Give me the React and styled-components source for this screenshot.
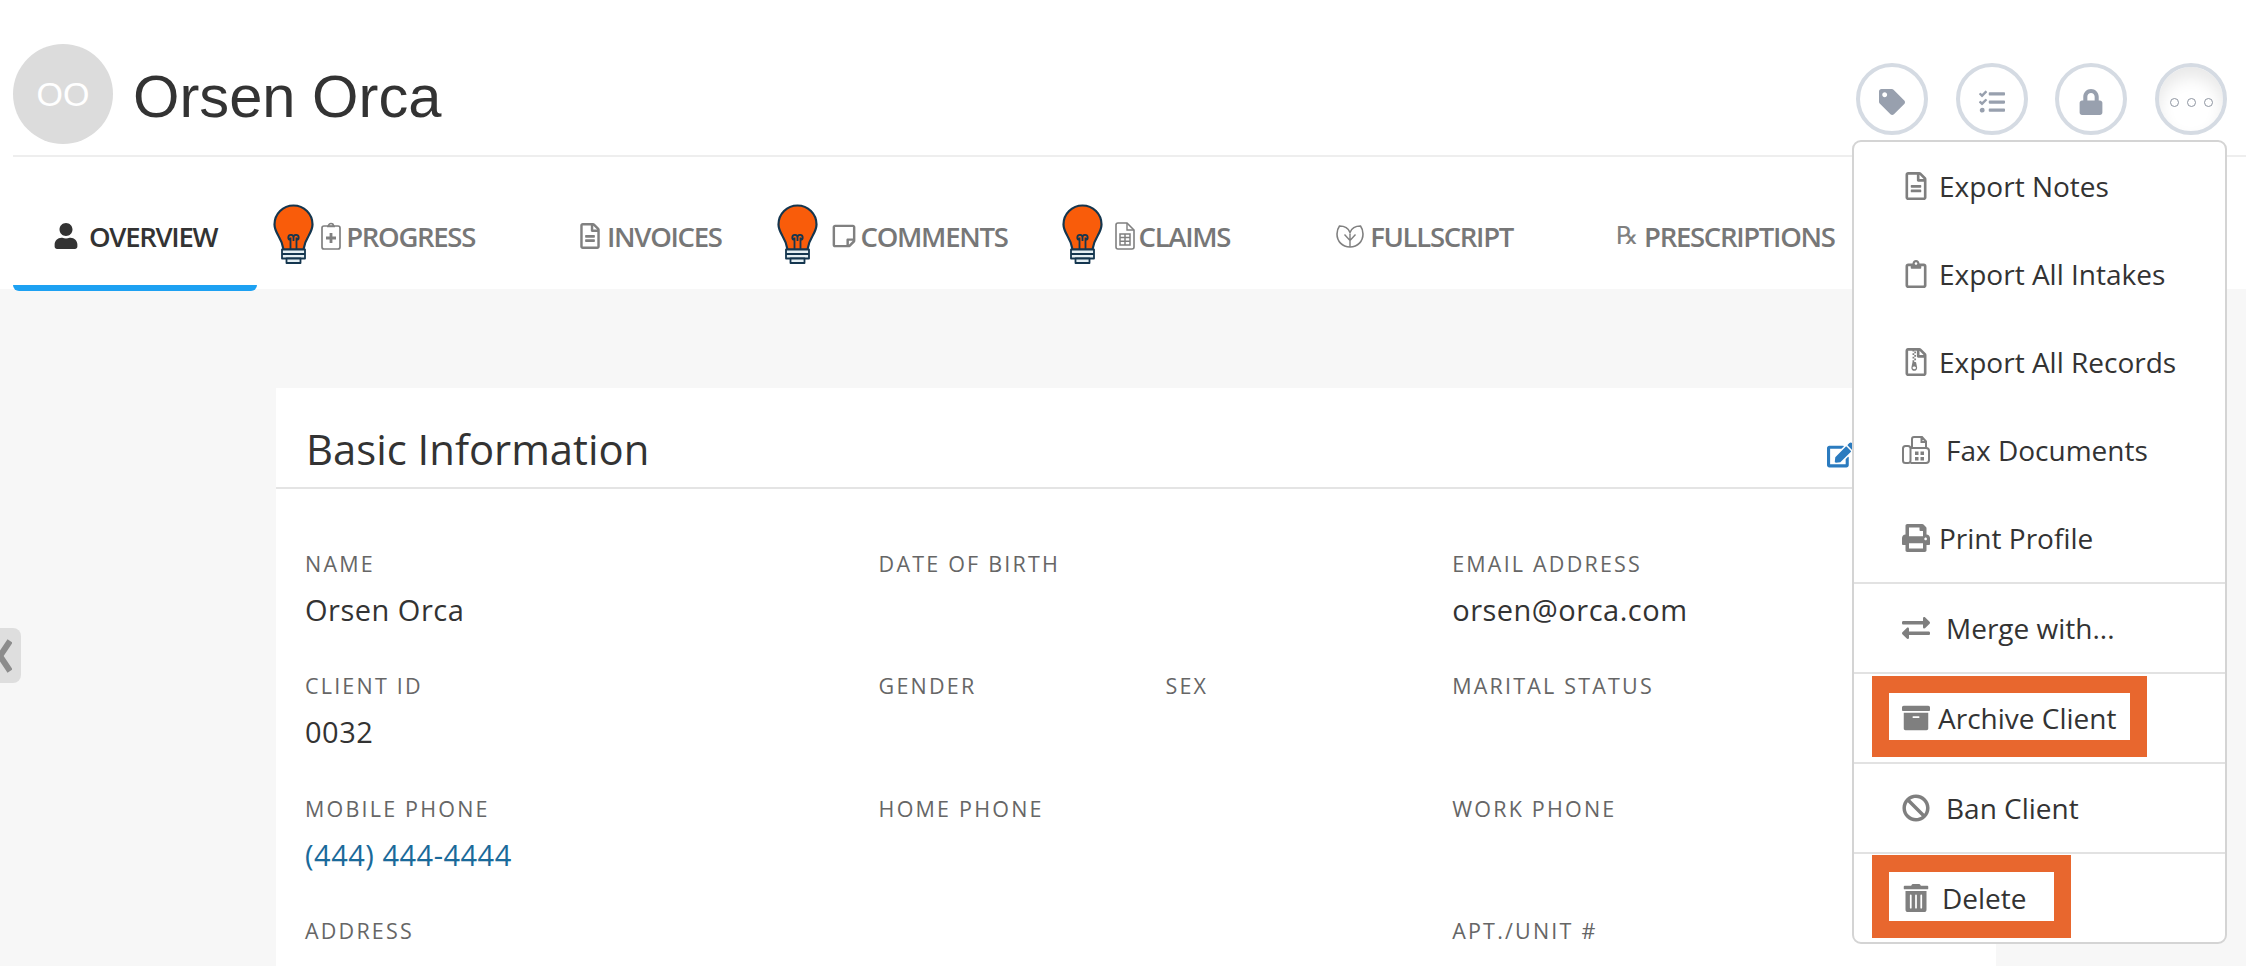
import styled, { createGlobalStyle } from "styled-components";
import {
  FaArchive,
  FaBan,
  FaEdit,
  FaExchangeAlt,
  FaLock,
  FaPrint,
  FaRegClipboard,
  FaRegFileAlt,
  FaRegFileArchive,
  FaRegStickyNote,
  FaTag,
  FaTasks,
  FaTrashAlt,
  FaUser,
} from "react-icons/fa";

const GlobalStyle = createGlobalStyle`
  html, body {
    margin: 0;
    padding: 0;
    background: #fff;
    font-family: "Open Sans", sans-serif;
  }
`;

const Page = styled.div`
  position: relative;
  width: 2246px;
  height: 966px;
  overflow: hidden;
  background: #fff;
`;

const Header = styled.header`
  position: relative;
  display: flex;
  align-items: flex-start;
  justify-content: space-between;
  height: 111px;
  margin-left: 13px;
  padding-top: 44px;
  border-bottom: 2px solid #eeeeee;
`;

const Identity = styled.div`
  display: flex;
  align-items: flex-start;
  gap: 20px;
`;

const Avatar = styled.div`
  display: flex;
  align-items: center;
  justify-content: center;
  width: 100px;
  height: 100px;
  border-radius: 50%;
  background: #dcdcdc;
  color: #fff;
  font-family: "Liberation Sans", sans-serif;
  font-size: 34px;
`;

const ClientName = styled.h1`
  margin: 3px 0 0;
  font-family: "Liberation Sans", sans-serif;
  font-size: 59.7px;
  font-weight: 400;
  line-height: 100px;
  color: #333;
`;

const Actions = styled.div`
  display: flex;
  gap: 27.6px;
  margin-top: 19px;
  margin-right: 19px;
`;

const RoundButton = styled.button`
  display: flex;
  align-items: center;
  justify-content: center;
  gap: 8px;
  width: 72px;
  height: 72px;
  padding: 6px 0 0;
  box-sizing: border-box;
  border: 4px solid #d5dbe3;
  border-radius: 50%;
  background: #fff;
  color: #98a0ae;
  font-size: 26px;
  box-shadow: ${(p) => (p.$open ? "inset 0 10px 16px rgba(0, 0, 0, 0.09)" : "none")};
`;

const Dot = styled.span`
  width: 9px;
  height: 9px;
  box-sizing: border-box;
  border: 1px solid #8e95a1;
  border-radius: 50%;
`;

const Menu = styled.div`
  position: absolute;
  z-index: 5;
  top: 140px;
  left: 1852px;
  width: 375px;
  box-sizing: border-box;
  border: 2px solid #d4d4d4;
  border-radius: 9px;
  background: #fff;
`;

const MenuSection = styled.div`
  border-top: ${(p) => (p.$first ? "none" : "2px solid #e2e2e2")};
`;

const MenuItem = styled.div`
  display: flex;
  align-items: ${(p) => (p.$marked ? "flex-start" : "center")};
  height: 88px;
  padding-left: ${(p) => (p.$marked ? 18 : 48)}px;
  color: #333;
  font-size: 28px;
  white-space: nowrap;
`;

const Marked = styled.div`
  display: flex;
  align-items: center;
  width: ${(p) => p.$width}px;
  height: ${(p) => p.$height}px;
  margin-top: ${(p) => p.$top}px;
  padding-top: ${(p) => p.$nudge || 0}px;
  padding-left: 13px;
  border: 17px solid #e8672e;
`;

const MenuIcon = styled.span`
  flex: none;
  display: flex;
  align-items: center;
  width: ${(p) => p.$slot}px;
  color: #7f7f7f;
  font-size: 28px;

  svg {
    display: block;
  }
`;

const TabBar = styled.nav`
  display: flex;
  height: 132px;
  margin-left: 13px;
`;

const Tab = styled.div`
  position: relative;
  z-index: 1;
  display: flex;
  align-items: center;
  gap: ${(p) => p.$gap ?? 7}px;
  height: ${(p) => (p.$active ? 134 : 132)}px;
  margin-right: ${(p) => p.$after ?? 24}px;
  padding: ${(p) => (p.$active ? 30 : 26)}px 40px 0;
  box-sizing: border-box;
  border-bottom: ${(p) => (p.$active ? "6px solid #1da1f2" : "none")};
  border-radius: 0 0 6px 6px;
  color: ${(p) => (p.$active ? "#333" : "#777")};
  font-size: 27.5px;
  font-weight: 550;
  letter-spacing: -1.3px;
  white-space: nowrap;
`;

const TabIcon = styled.span`
  flex: none;
  display: flex;
  align-items: center;
  color: ${(p) => (p.$active ? "#333" : "#808080")};
  font-size: 26px;

  svg {
    display: block;
  }
`;

const RxMark = styled.span`
  display: block;
  width: 24px;
  color: #808080;
  font-family: "DejaVu Sans", sans-serif;
  font-size: 25px;
  font-weight: 400;
  line-height: 28px;
  letter-spacing: 0;
`;

const BulbSpot = styled.span`
  position: absolute;
  top: 47px;
  left: ${(p) => p.$left}px;
`;

const Main = styled.main`
  height: 677px;
  padding: 99px 0 0 276px;
  box-sizing: border-box;
  background: #f7f7f7;
`;

const Card = styled.section`
  width: 1720px;
  height: 700px;
  background: #fff;
`;

const CardHeader = styled.div`
  display: flex;
  align-items: center;
  justify-content: space-between;
  height: 101px;
  padding: 22px 0 0 30px;
  box-sizing: border-box;
  border-bottom: 2px solid #e4e4e4;
`;

const CardTitle = styled.h2`
  margin: 0;
  color: #333;
  font-size: 41.8px;
  font-weight: 400;
`;

const EditLink = styled.span`
  display: flex;
  margin: 13px 141px 0 0;
  color: #2b7bbf;
  font-size: 28px;
`;

const FieldGrid = styled.div`
  display: grid;
  grid-template-columns: repeat(6, 286.8px);
  grid-auto-rows: 122.3px;
  padding: 59px 0 0 29px;
`;

const Field = styled.div`
  grid-column: span ${(p) => p.$span || 2};
`;

const Label = styled.div`
  color: #666;
  font-size: 21.5px;
  line-height: 32px;
  letter-spacing: 2.2px;
`;

const Value = styled.div`
  margin-top: 10px;
  color: ${(p) => (p.$link ? "#1a6a9a" : "#333")};
  font-size: 29px;
  line-height: 40px;
  letter-spacing: 0.5px;
`;

const SideHandle = styled.div`
  position: absolute;
  top: 628px;
  left: 0;
  display: flex;
  align-items: center;
  width: 21px;
  height: 55px;
  overflow: hidden;
  border-radius: 0 8px 8px 0;
  background: #dedede;
  color: #8c8c8c;
`;

function ClippedChevron() {
  return (
    <svg width="12" height="36" viewBox="0 0 12 36" fill="none" stroke="currentColor" strokeWidth="6">
      <path d="M10 3L0 18l10 15" />
    </svg>
  );
}

function Bulb() {
  return (
    <svg width="41" height="60" viewBox="0 0 41 60">
      <path
        d="M20.500 1.500C10 1.500 1.500 10 1.500 20.500 1.500 25 3.500 28.500 5.500 32 8 36 9.500 40 10.500 45.500h20C31.500 40 33 36 35.500 32 37.500 28.500 39.500 25 39.500 20.500 39.500 10 31 1.500 20.500 1.500Z"
        fill="#f95c0a"
        stroke="#14364f"
        strokeWidth="2.2"
      />
      <path
        d="M17.500 45.500V33.500M23.500 45.500V33.500M17.500 36a2.600 2.600 0 1 1 3-2.500V37M23.500 36a2.600 2.600 0 1 0-3-2.500"
        fill="none"
        stroke="#14364f"
        strokeWidth="1.8"
      />
      <path d="M9 45.500h23v4.500H9zM9 50h23v4.500H9z" fill="#e6f0f4" stroke="#14364f" strokeWidth="1.800" strokeLinejoin="round" />
      <path d="M13.500 54.500h14V59h-14z" fill="#e6f0f4" stroke="#14364f" strokeWidth="1.800" strokeLinejoin="round" />
    </svg>
  );
}

function ClipboardPlus() {
  return (
    <svg width="20" height="28" viewBox="0 0 20 28" fill="none" stroke="currentColor">
      <rect x="1" y="4" width="18" height="23" rx="2" strokeWidth="1.7" />
      <path d="M6 4.500h8M7.500 4a2.500 2.500 0 0 1 5 0" strokeWidth="1.700" />
      <path d="M10 11v10M5 16h10" strokeWidth="2.800" />
    </svg>
  );
}

function ClaimsFile() {
  return (
    <svg width="20" height="28" viewBox="0 0 20 28" fill="none" stroke="currentColor">
      <path d="M3 1h9l7 7v17a2 2 0 0 1-2 2H3a2 2 0 0 1-2-2V3a2 2 0 0 1 2-2Z" strokeWidth="1.600" />
      <path d="M12 1v7h7" strokeWidth="1.400" />
      <path d="M5 12h10v11H5zM5 15.500h10M5 19.200h10M10 12v11" strokeWidth="1.500" />
    </svg>
  );
}

function LeafMark() {
  return (
    <svg width="28" height="23" viewBox="0 0 28 23" fill="none" stroke="currentColor" strokeWidth="1.600">
      <path d="M14 22C6 22 1 16 1 9 1 5.500 2 3 3.500 1 9 1 12.500 3.500 14 7.500 15.500 3.500 19 1 24.500 1 26 3 27 5.500 27 9 27 16 22 22 14 22Z" />
      <path d="M14 22V9M14 15.500L8.500 9.500M14 15.500L19.500 9.500" strokeWidth="1.400" />
    </svg>
  );
}

function FaxMark() {
  return (
    <svg width="28" height="28" viewBox="0 0 28 28" fill="none" stroke="currentColor" strokeWidth="2">
      <rect x="1" y="10" width="7.500" height="17" rx="2.500" />
      <path d="M8.500 12H24a3 3 0 0 1 3 3v9a3 3 0 0 1-3 3H8.500" />
      <path d="M10 12V3a2 2 0 0 1 2-2h8l4 4.500V12M19.500 1v5H24" />
      <path d="M13 15.500h3.500V19H13zM18.500 15.500H22V19h-3.500zM13 21h3.500v3.500H13zM18.500 21H22v3.500h-3.500z" fill="currentColor" stroke="none" />
    </svg>
  );
}

const Tabs = [
  { label: "OVERVIEW", active: true, icon: <FaUser />, gap: 10 },
  { label: "PROGRESS", icon: <ClipboardPlus />, gap: 5, bulb: -8, after: 22 },
  { label: "INVOICES", icon: <FaRegFileAlt />, gap: 4, after: 29 },
  { label: "COMMENTS", icon: <FaRegStickyNote />, gap: 4, bulb: -14, after: 27 },
  { label: "CLAIMS", icon: <ClaimsFile />, gap: 4, bulb: -13, after: 26 },
  { label: "FULLSCRIPT", icon: <LeafMark />, gap: 6, after: 23 },
  { label: "PRESCRIPTIONS", icon: <RxMark>℞</RxMark>, gap: 4, after: 0 },
];

const Fields = [
  { label: "NAME", value: "Orsen Orca" },
  { label: "DATE OF BIRTH" },
  { label: "EMAIL ADDRESS", value: "orsen@orca.com" },
  { label: "CLIENT ID", value: "0032" },
  { label: "GENDER", span: 1 },
  { label: "SEX", span: 1 },
  { label: "MARITAL STATUS" },
  { label: "MOBILE PHONE", value: "(444) 444-4444", link: true },
  { label: "HOME PHONE" },
  { label: "WORK PHONE" },
  { label: "ADDRESS", span: 4 },
  { label: "APT./UNIT #" },
];

export default function App() {
  return (
    <Page>
      <GlobalStyle />
      <Header>
        <Identity>
          <Avatar>OO</Avatar>
          <ClientName>Orsen Orca</ClientName>
        </Identity>
        <Actions>
          <RoundButton><FaTag /></RoundButton>
          <RoundButton><FaTasks /></RoundButton>
          <RoundButton><FaLock /></RoundButton>
          <RoundButton $open>
            <Dot />
            <Dot />
            <Dot />
          </RoundButton>
        </Actions>
      </Header>

      <Menu>
        <MenuSection $first>
          <MenuItem><MenuIcon $slot={37}><FaRegFileAlt /></MenuIcon>Export Notes</MenuItem>
          <MenuItem><MenuIcon $slot={37}><FaRegClipboard /></MenuIcon>Export All Intakes</MenuItem>
          <MenuItem><MenuIcon $slot={37}><FaRegFileArchive /></MenuIcon>Export All Records</MenuItem>
          <MenuItem><MenuIcon $slot={44}><FaxMark /></MenuIcon>Fax Documents</MenuItem>
          <MenuItem><MenuIcon $slot={37}><FaPrint /></MenuIcon>Print Profile</MenuItem>
        </MenuSection>
        <MenuSection>
          <MenuItem><MenuIcon $slot={44}><FaExchangeAlt /></MenuIcon>Merge with...</MenuItem>
        </MenuSection>
        <MenuSection>
          <MenuItem $marked>
            <Marked $width={228} $height={45} $top={2} $nudge={2}>
              <MenuIcon $slot={36}><FaArchive /></MenuIcon>Archive Client
            </Marked>
          </MenuItem>
        </MenuSection>
        <MenuSection>
          <MenuItem><MenuIcon $slot={44}><FaBan /></MenuIcon>Ban Client</MenuItem>
        </MenuSection>
        <MenuSection>
          <MenuItem $marked>
            <Marked $width={152} $height={46} $top={1} $nudge={3}>
              <MenuIcon $slot={40}><FaTrashAlt /></MenuIcon>Delete
            </Marked>
          </MenuItem>
        </MenuSection>
      </Menu>

      <TabBar>
        {Tabs.map((tab) => (
          <Tab key={tab.label} $active={tab.active} $gap={tab.gap} $after={tab.after}>
            {tab.bulb !== undefined && (
              <BulbSpot $left={tab.bulb}>
                <Bulb />
              </BulbSpot>
            )}
            <TabIcon $active={tab.active}>{tab.icon}</TabIcon>
            {tab.label}
          </Tab>
        ))}
      </TabBar>

      <Main>
        <Card>
          <CardHeader>
            <CardTitle>Basic Information</CardTitle>
            <EditLink><FaEdit /></EditLink>
          </CardHeader>
          <FieldGrid>
            {Fields.map((field) => (
              <Field key={field.label} $span={field.span}>
                <Label>{field.label}</Label>
                {field.value && <Value $link={field.link}>{field.value}</Value>}
              </Field>
            ))}
          </FieldGrid>
        </Card>
      </Main>

      <SideHandle><ClippedChevron /></SideHandle>
    </Page>
  );
}
